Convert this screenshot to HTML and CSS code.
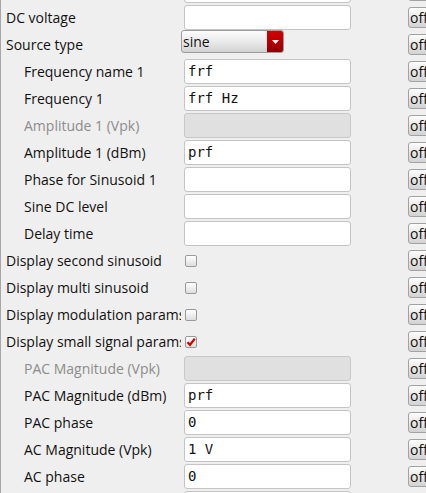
FILE: index.html
```html
<!DOCTYPE html>
<html>
<head>
<meta charset="utf-8">
<link rel="stylesheet" href="styles.css">
</head>
<body>
<div class="panel">
  <div class="row"><div class="label"></div><div class="field"><div class="input"></div></div><div class="ctl"><span class="off">off</span></div></div>
  <div class="row"><div class="label">DC voltage</div><div class="field"><div class="input"></div></div><div class="ctl"><span class="off">off</span></div></div>
  <div class="row"><div class="label">Source type</div><div class="field"><div class="select"><span class="select-text">sine</span><span class="select-btn"><svg width="7" height="4" viewBox="0 0 7 4"><path d="M0 0H7L3.5 4Z" fill="#fff"/></svg></span></div></div><div class="ctl"><span class="off">off</span></div></div>
  <div class="row"><div class="label indent">Frequency name 1</div><div class="field"><div class="input">frf</div></div><div class="ctl"><span class="off">off</span></div></div>
  <div class="row"><div class="label indent">Frequency 1</div><div class="field"><div class="input">frf Hz</div></div><div class="ctl"><span class="off">off</span></div></div>
  <div class="row"><div class="label indent disabled">Amplitude 1 (Vpk)</div><div class="field"><div class="input dis"></div></div><div class="ctl"><span class="off">off</span></div></div>
  <div class="row"><div class="label indent">Amplitude 1 (dBm)</div><div class="field"><div class="input">prf</div></div><div class="ctl"><span class="off">off</span></div></div>
  <div class="row"><div class="label indent">Phase for Sinusoid 1</div><div class="field"><div class="input"></div></div><div class="ctl"><span class="off">off</span></div></div>
  <div class="row"><div class="label indent">Sine DC level</div><div class="field"><div class="input"></div></div><div class="ctl"><span class="off">off</span></div></div>
  <div class="row"><div class="label indent">Delay time</div><div class="field"><div class="input"></div></div><div class="ctl"><span class="off">off</span></div></div>
  <div class="row"><div class="label">Display second sinusoid</div><div class="field"><span class="check"></span></div><div class="ctl"><span class="off">off</span></div></div>
  <div class="row"><div class="label">Display multi sinusoid</div><div class="field"><span class="check"></span></div><div class="ctl"><span class="off">off</span></div></div>
  <div class="row"><div class="label">Display modulation params</div><div class="field"><span class="check"></span></div><div class="ctl"><span class="off">off</span></div></div>
  <div class="row"><div class="label">Display small signal params</div><div class="field"><span class="check"><svg width="10" height="10" viewBox="0 0 10 10"><path d="M1.5 5.2L4 7.8L8.8 1.8" fill="none" stroke="#d40000" stroke-width="2.2"/></svg></span></div><div class="ctl"><span class="off">off</span></div></div>
  <div class="row"><div class="label indent disabled">PAC Magnitude (Vpk)</div><div class="field"><div class="input dis"></div></div><div class="ctl"><span class="off">off</span></div></div>
  <div class="row"><div class="label indent">PAC Magnitude (dBm)</div><div class="field"><div class="input">prf</div></div><div class="ctl"><span class="off">off</span></div></div>
  <div class="row"><div class="label indent">PAC phase</div><div class="field"><div class="input">0</div></div><div class="ctl"><span class="off">off</span></div></div>
  <div class="row"><div class="label indent">AC Magnitude (Vpk)</div><div class="field"><div class="input">1 V</div></div><div class="ctl"><span class="off">off</span></div></div>
  <div class="row"><div class="label indent">AC phase</div><div class="field"><div class="input">0</div></div><div class="ctl"><span class="off">off</span></div></div>
  <div class="row"><div class="label indent"></div><div class="field"><div class="input"></div></div><div class="ctl"><span class="off">off</span></div></div>
</div>
</body>
</html>
```
FILE: styles.css
```css
html, body {
  margin: 0;
  padding: 0;
  background: #efefef;
  overflow: hidden;
  width: 426px;
  height: 493px;
}
.panel {
  margin-top: -23px;
  border-left: 1px solid #a6a6a6;
  font-family: "Open Sans", "Noto Sans", sans-serif;
  font-size: 14px;
  color: #111;
  width: 460px;
}
.row {
  display: grid;
  grid-template-columns: 180px 227px 52px;
  height: 27px;
  align-items: center;
}
.label {
  padding-left: 5px;
  white-space: nowrap;
  overflow: hidden;
  line-height: 27px;
  height: 27px;
}
.label.indent { padding-left: 23px; }
.label.disabled { color: #8c8c8c; }
.field {
  display: flex;
  align-items: center;
  height: 27px;
}
.input {
  margin-left: 3px;
  width: 165px;
  height: 23px;
  border: 1px solid #c4c4c4;
  border-radius: 3px;
  background: #fff;
  box-sizing: content-box;
  font-family: "DejaVu Sans Mono", monospace;
  font-size: 14px;
  line-height: 23px;
  padding-left: 3px;
  padding-right: 0;
  width: 162px;
  color: #111;
  white-space: pre;
}
.input.dis {
  background: #e0e0e0;
  border-color: #c8c8c8;
}
.select {
  align-self: flex-start;
  margin-top: -1px;
  width: 101px;
  height: 21px;
  border: 1px solid #9c9c9c;
  border-radius: 3px;
  background: linear-gradient(#fcfcfc, #e6e6e6 60%, #d2d2d2);
  display: flex;
  overflow: hidden;
}
.select-text {
  flex: 1;
  padding-left: 1px;
  line-height: 21px;
  font-size: 14px;
}
.select-btn {
  width: 16px;
  background: linear-gradient(#d40000, #b00000 60%, #8c0000);
  display: flex;
  align-items: center;
  justify-content: center;
}
.check {
  margin-left: 4px;
  width: 10px;
  height: 10px;
  border: 1px solid #9a9a9a;
  border-radius: 2px;
  background: linear-gradient(#ffffff, #dedede);
  display: flex;
  align-items: center;
  justify-content: center;
}
.ctl {
  display: flex;
  align-items: center;
  height: 27px;
}
.off {
  display: block;
  width: 40px;
  height: 19px;
  border: 1px solid #a2a2a2;
  border-radius: 3px;
  background: linear-gradient(#fdfdfd, #e4e4e4 60%, #d2d2d2);
  padding-left: 1px;
  line-height: 19px;
  font-size: 14px;
  color: #111;
}
```
